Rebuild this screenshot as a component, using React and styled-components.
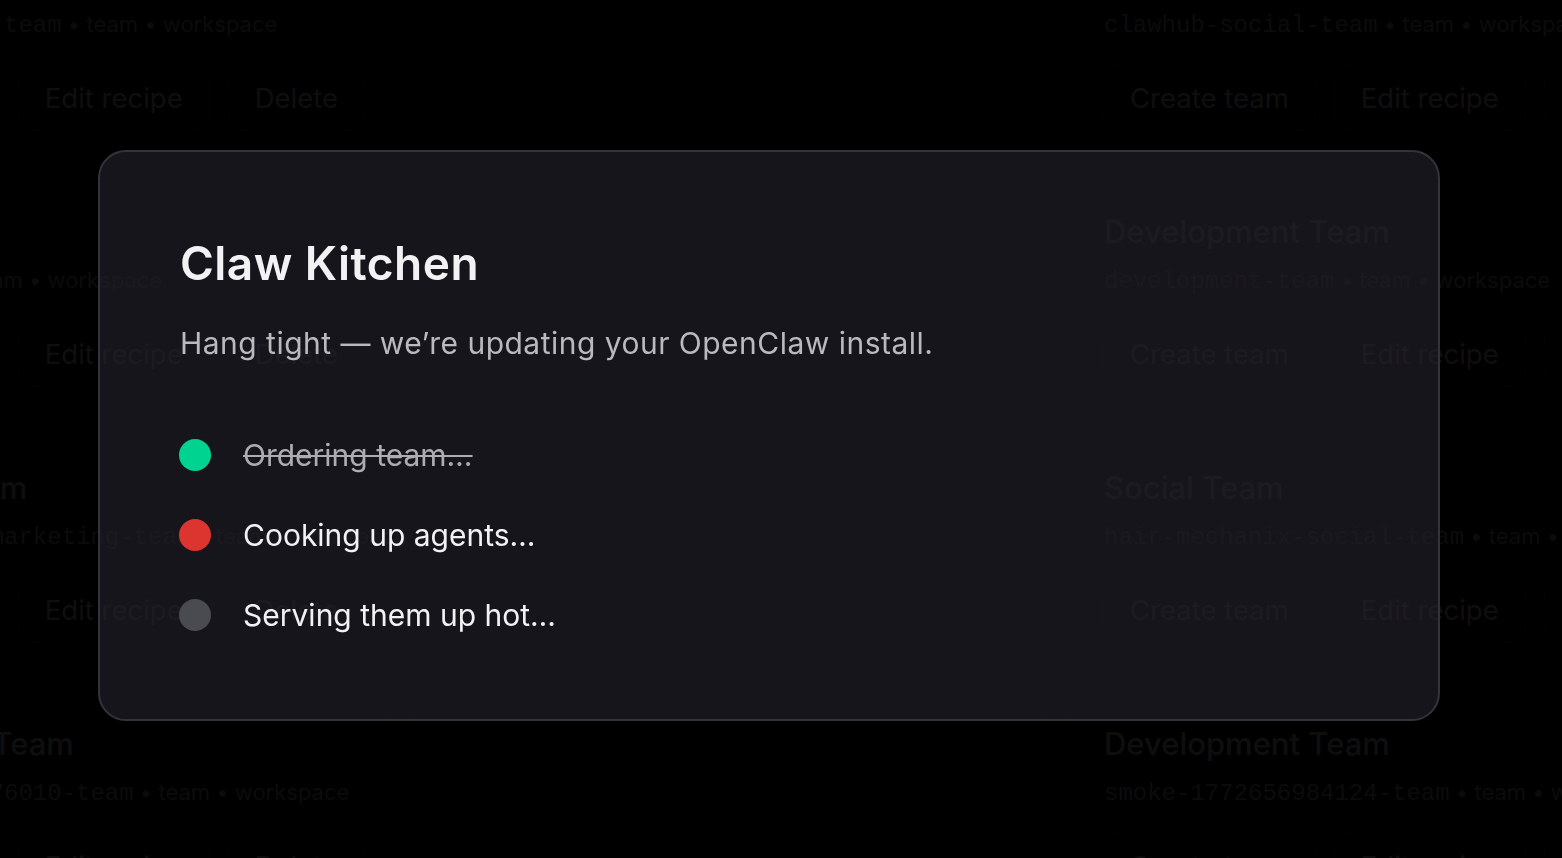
import React from 'react'
import styled, { createGlobalStyle } from 'styled-components';

const GlobalStyle = createGlobalStyle`
    html, body {
        margin:0;
        padding:0;
        background:#050507;
        overflow:hidden;
    }
    * { box-sizing:border-box; }
`;

const teams = [
    [
        { name: 'Content Team', slug: 'clawhub-growth-team' },
        null,
        { name: 'Social Team', slug: 'clawhub-social-team' },
    ],
    [
        { name: 'Review Team', slug: 'review-team' },
        null,
        { name: 'Development Team', slug: 'development-team' },
    ],
    [
        { name: 'Marketing Team', slug: 'hair-mechanix-marketing-team' },
        null,
        { name: 'Social Team', slug: 'hair-mechanix-social-team' },
    ],
    [
        { name: 'Development Team', slug: 'smoke-1772656976010-team' },
        null,
        { name: 'Development Team', slug: 'smoke-1772656984124-team' },
    ],
];

const steps = [
    { label: 'Ordering team…', state: 'done' },
    { label: 'Cooking up agents…', state: 'active' },
    { label: 'Serving them up hot…', state: 'pending' },
];

function TeamCard({ team }) {
    if (!team) return <Card />;
    return (
        <Card>
            <CardTitle>{team.name}</CardTitle>
            <CardMeta>
                <Slug>{team.slug}</Slug> • team • workspace
            </CardMeta>
            <CardActions>
                <GhostButton>Create team</GhostButton>
                <GhostButton>Edit recipe</GhostButton>
                <GhostButton>Delete</GhostButton>
            </CardActions>
        </Card>
    );
}

function App() {
    return (
        <>
            <GlobalStyle />
            <Page>
                <Grid>
                    {teams.flat().map((t, i) => <TeamCard key={i} team={t} />)}
                </Grid>
            </Page>

            <Overlay>
                <Modal>
                    <Title>Claw Kitchen</Title>
                    <Lead>Hang tight — we’re updating your OpenClaw install.</Lead>
                    <StepList>
                        {steps.map(s => (
                            <Step key={s.label}>
                                <Dot state={s.state} />
                                <StepLabel done={s.state === 'done'}>{s.label}</StepLabel>
                            </Step>
                        ))}
                    </StepList>
                </Modal>
            </Overlay>
        </>
    )
}

export default App

const Page = styled.div`
    height:100vh;
    overflow:hidden;
    font-family:Inter, "Liberation Sans", sans-serif;
    color:#e6e6ea;
`;

const Grid = styled.div`
    display:grid;
    grid-template-columns:repeat(3, 634px);
    grid-auto-rows:232px;
    gap:24px;
    margin-left:-247px;
    margin-top:-78px;
`;

const Card = styled.div`
    border:1px solid #2a2933;
    border-radius:28px;
    padding:33px 32px 24px 34px;
    display:flex;
    flex-direction:column;
`;

const CardTitle = styled.div`
    font-size:31px;
    font-weight:500;
    line-height:40px;
    white-space:nowrap;
`;

const CardMeta = styled.div`
    margin-top:12px;
    font-size:22px;
    line-height:32px;
    color:#b5b5bd;
    white-space:nowrap;
`;

const Slug = styled.span`
    font-family:"Liberation Mono", monospace;
    font-size:24px;
`;

const CardActions = styled.div`
    margin-top:23px;
    margin-left:-1px;
    display:flex;
    gap:18px;
`;

const GhostButton = styled.button`
    height:66px;
    padding:0 26px;
    border:1px solid #2a2933;
    border-radius:18px;
    background:rgba(255,255,255,0.02);
    color:#e6e6ea;
    font-family:Inter, "Liberation Sans", sans-serif;
    font-size:27.5px;
    white-space:nowrap;
`;

const Overlay = styled.div`
    position:fixed;
    inset:0;
    background:rgba(0,0,0,0.94);
    display:flex;
    align-items:center;
    justify-content:center;
    padding:12px 24px 0 0;
`;

const Modal = styled.div`
    width:1342px;
    border:2px solid #34333b;
    border-radius:28px;
    background:rgba(38,37,46,0.58);
    padding:80px;
    font-family:Inter, "Liberation Sans", sans-serif;
    display:flex;
    flex-direction:column;
`;

const Title = styled.h2`
    margin:4px 0 0;
    font-size:46px;
    line-height:54px;
    font-weight:600;
    letter-spacing:0.01em;
    color:#f2f2f4;
`;

const Lead = styled.p`
    margin:33px 0 0;
    font-size:30px;
    line-height:40px;
    letter-spacing:0.016em;
    color:#b9b9be;
`;

const StepList = styled.ul`
    list-style:none;
    margin:68px 0 0;
    padding:0;
    display:flex;
    flex-direction:column;
    gap:32px;
`;

const Step = styled.li`
    display:flex;
    align-items:center;
    gap:32px;
    height:48px;
`;

const dotColors = {
    done: '#00d28f',
    active: '#dc3530',
    pending: '#4a4a51',
};

const Dot = styled.span`
    width:32px;
    height:32px;
    border-radius:50%;
    flex-shrink:0;
    margin-left:-1px;
    background:${props => dotColors[props.state]};
`;

const StepLabel = styled.span`
    font-size:30px;
    line-height:40px;
    color:${props => props.done ? '#acacb1' : '#f2f2f4'};
    text-decoration:${props => props.done ? 'line-through' : 'none'};
    text-decoration-thickness:2px;
`;
